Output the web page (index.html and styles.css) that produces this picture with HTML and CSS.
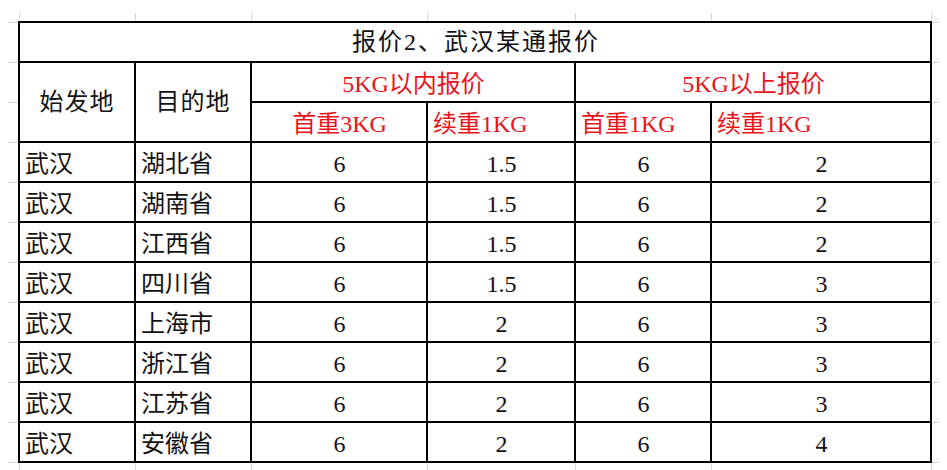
FILE: index.html
```html
<!DOCTYPE html>
<html lang="zh-CN">
<head>
<meta charset="utf-8">
<title>报价2、武汉某通报价</title>
<link rel="stylesheet" href="styles.css">
</head>
<body>
<table class="sheet">
  <colgroup>
    <col class="c-el"><col class="c1"><col class="c2"><col class="c3"><col class="c4"><col class="c5"><col class="c6"><col class="c-er">
  </colgroup>
  <tr class="r-et">
    <td class="e el"></td><td class="e"></td><td class="e"></td><td class="e"></td><td class="e"></td><td class="e"></td><td class="e"></td><td class="e er"></td>
  </tr>
  <tr class="r">
    <td class="e el"></td><td class="b title" colspan="6">报价2、武汉某通报价</td><td class="e er"></td>
  </tr>
  <tr class="r">
    <td class="e el"></td>
    <td class="b hd" rowspan="2">始发地</td>
    <td class="b hd" rowspan="2">目的地</td>
    <td class="b red ctr" colspan="2">5KG以内报价</td>
    <td class="b red ctr" colspan="2">5KG以上报价</td>
    <td class="e er"></td>
  </tr>
  <tr class="r">
    <td class="e el"></td>
    <td class="b red ctr">首重3KG</td>
    <td class="b red">续重1KG</td>
    <td class="b red">首重1KG</td>
    <td class="b red">续重1KG</td>
    <td class="e er"></td>
  </tr>
  <tr class="r"><td class="e el"></td><td class="b">武汉</td><td class="b">湖北省</td><td class="b num">6</td><td class="b num">1.5</td><td class="b num">6</td><td class="b num">2</td><td class="e er"></td></tr>
  <tr class="r"><td class="e el"></td><td class="b">武汉</td><td class="b">湖南省</td><td class="b num">6</td><td class="b num">1.5</td><td class="b num">6</td><td class="b num">2</td><td class="e er"></td></tr>
  <tr class="r"><td class="e el"></td><td class="b">武汉</td><td class="b">江西省</td><td class="b num">6</td><td class="b num">1.5</td><td class="b num">6</td><td class="b num">2</td><td class="e er"></td></tr>
  <tr class="r"><td class="e el"></td><td class="b">武汉</td><td class="b">四川省</td><td class="b num">6</td><td class="b num">1.5</td><td class="b num">6</td><td class="b num">3</td><td class="e er"></td></tr>
  <tr class="r"><td class="e el"></td><td class="b">武汉</td><td class="b">上海市</td><td class="b num">6</td><td class="b num">2</td><td class="b num">6</td><td class="b num">3</td><td class="e er"></td></tr>
  <tr class="r"><td class="e el"></td><td class="b">武汉</td><td class="b">浙江省</td><td class="b num">6</td><td class="b num">2</td><td class="b num">6</td><td class="b num">3</td><td class="e er"></td></tr>
  <tr class="r"><td class="e el"></td><td class="b">武汉</td><td class="b">江苏省</td><td class="b num">6</td><td class="b num">2</td><td class="b num">6</td><td class="b num">3</td><td class="e er"></td></tr>
  <tr class="r"><td class="e el"></td><td class="b">武汉</td><td class="b">安徽省</td><td class="b num">6</td><td class="b num">2</td><td class="b num">6</td><td class="b num">4</td><td class="e er"></td></tr>
  <tr class="r-eb">
    <td class="e el eb"></td><td class="e eb"></td><td class="e eb"></td><td class="e eb"></td><td class="e eb"></td><td class="e eb"></td><td class="e eb"></td><td class="e er eb"></td>
  </tr>
</table>
</body>
</html>
```

FILE: styles.css
```css
html, body {
  margin: 0;
  padding: 0;
  background: #ffffff;
}

body {
  font-family: "Liberation Serif", "Noto Sans CJK SC", serif;
  color: #111111;
  overflow: hidden;
}

.sheet {
  border-collapse: collapse;
  table-layout: fixed;
  width: 932px;
  margin: 13px 0 0 8px;
  font-size: 24px;
}

.c-el { width: 11px; }
.c1 { width: 116px; }
.c2 { width: 116px; }
.c3 { width: 176px; }
.c4 { width: 148px; }
.c5 { width: 136px; }
.c6 { width: 220px; }
.c-er { width: 9px; }

.r-et, .r-eb { height: 9px; }
.r { height: 40px; }

td {
  padding: 0;
  white-space: nowrap;
  overflow: hidden;
  line-height: 1;
}

.e {
  border: 1px solid #d6d6d6;
}
.r-et .e { border-top: none; }
.el { border-left: none; }
.er { border-right: none; }
.eb { border-bottom: none; }

.b {
  border: 2px solid #000000;
  padding: 3px 4px 0 5px;
  text-align: left;
  vertical-align: middle;
}

.title {
  text-align: center;
  padding: 0 0 0 2px;
  letter-spacing: 2px;
}

.hd {
  text-align: center;
  padding: 0;
  letter-spacing: 1px;
}

.ctr {
  text-align: center;
}

.red {
  color: #e8141c;
}

.num {
  text-align: center;
}
```
